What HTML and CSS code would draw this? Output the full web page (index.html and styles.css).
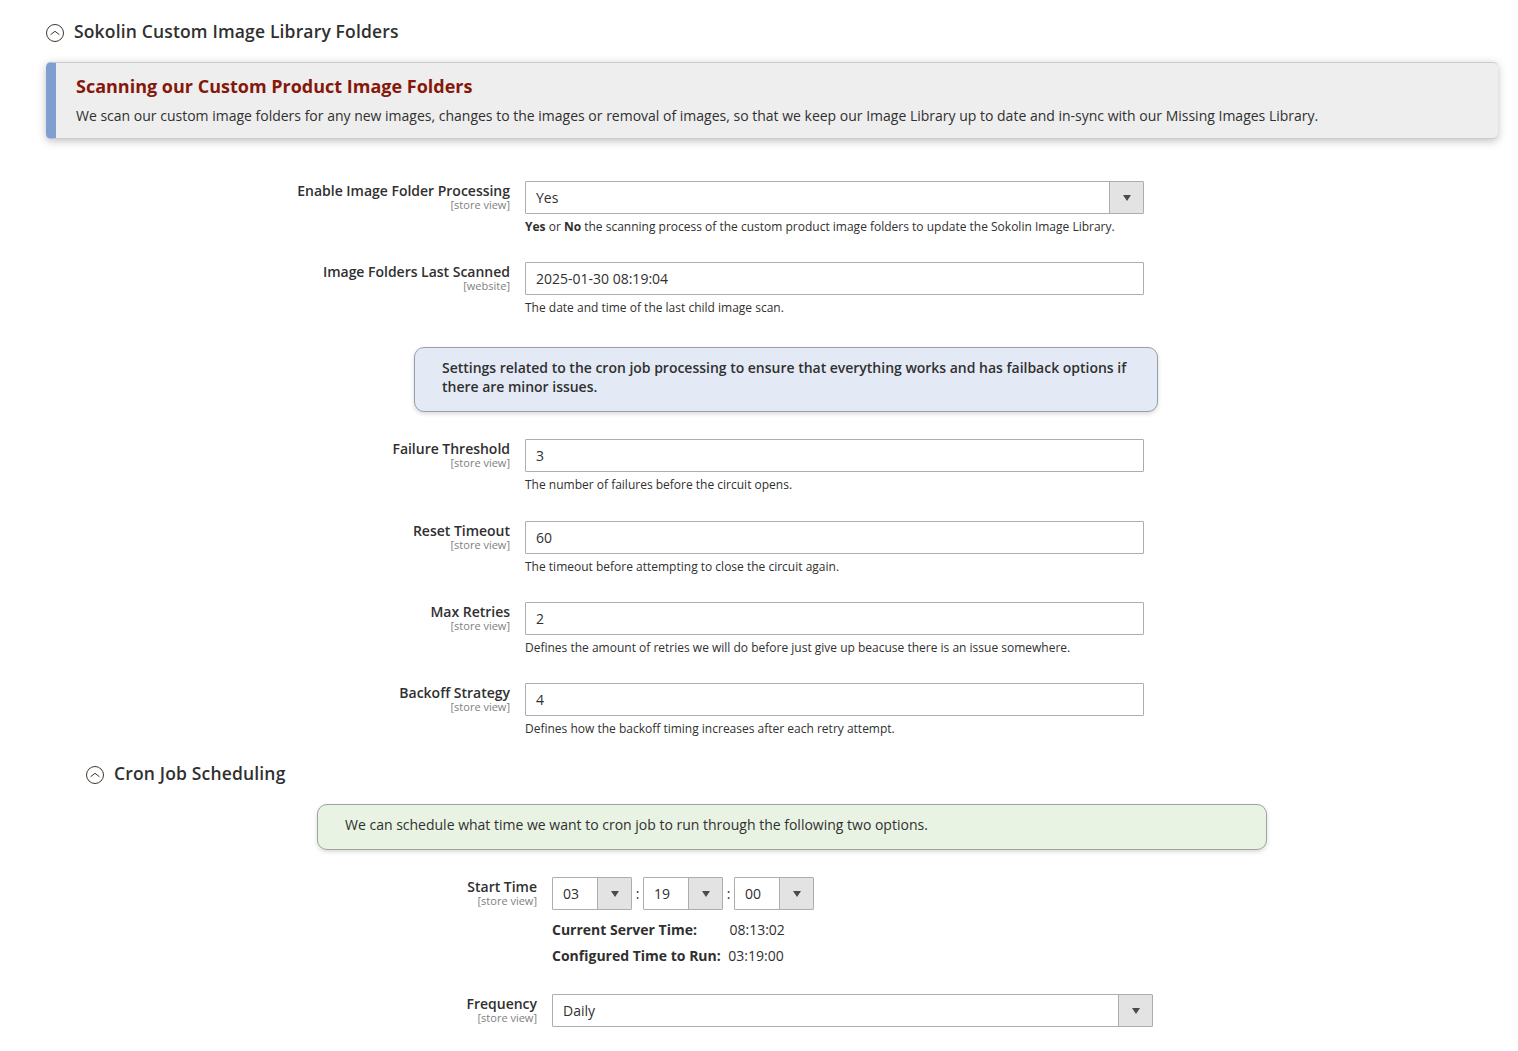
FILE: index.html
```html
<!DOCTYPE html>
<html lang="en">
<head>
<meta charset="utf-8">
<title>Sokolin Custom Image Library Folders</title>
<link rel="stylesheet" href="styles.css">
</head>
<body>
<main class="config">
  <h2 class="section-title section-title-main">
    <svg class="toggle" viewBox="0 0 18 18"><circle cx="9" cy="9" r="8.5"/><path d="M4.6 10.700 9 7.300l4.400 3.400"/></svg>
    <span>Sokolin Custom Image Library Folders</span>
  </h2>

  <div class="banner">
    <h3 class="banner-title">Scanning our Custom Product Image Folders</h3>
    <p class="banner-text">We scan our custom image folders for any new images, changes to the images or removal of images, so that we keep our Image Library up to date and in-sync with our Missing Images Library.</p>
  </div>

  <section class="rows rows-scan">
    <div class="row">
      <div class="label">Enable Image Folder Processing<span class="scope">[store view]</span></div>
      <div class="field">
        <div class="control"><span class="value">Yes</span><span class="arrow"><svg viewBox="0 0 8 6"><path d="M0 0h8L4 6z"/></svg></span></div>
        <p class="note"><b>Yes</b> or <b>No</b> the scanning process of the custom product image folders to update the Sokolin Image Library.</p>
      </div>
    </div>
    <div class="row">
      <div class="label">Image Folders Last Scanned<span class="scope">[website]</span></div>
      <div class="field">
        <div class="control"><span class="value">2025-01-30 08:19:04</span></div>
        <p class="note">The date and time of the last child image scan.</p>
      </div>
    </div>
  </section>

  <div class="notice notice-blue">Settings related to the cron job processing to ensure that everything works and has failback options if there are minor issues.</div>

  <section class="rows rows-retry">
    <div class="row">
      <div class="label">Failure Threshold<span class="scope">[store view]</span></div>
      <div class="field">
        <div class="control"><span class="value">3</span></div>
        <p class="note">The number of failures before the circuit opens.</p>
      </div>
    </div>
    <div class="row">
      <div class="label">Reset Timeout<span class="scope">[store view]</span></div>
      <div class="field">
        <div class="control"><span class="value">60</span></div>
        <p class="note">The timeout before attempting to close the circuit again.</p>
      </div>
    </div>
    <div class="row">
      <div class="label">Max Retries<span class="scope">[store view]</span></div>
      <div class="field">
        <div class="control"><span class="value">2</span></div>
        <p class="note">Defines the amount of retries we will do before just give up beacuse there is an issue somewhere.</p>
      </div>
    </div>
    <div class="row row-last">
      <div class="label">Backoff Strategy<span class="scope">[store view]</span></div>
      <div class="field">
        <div class="control"><span class="value">4</span></div>
        <p class="note">Defines how the backoff timing increases after each retry attempt.</p>
      </div>
    </div>
  </section>

  <h2 class="section-title section-title-nested">
    <svg class="toggle" viewBox="0 0 18 18"><circle cx="9" cy="9" r="8.5"/><path d="M4.6 10.700 9 7.300l4.400 3.400"/></svg>
    <span>Cron Job Scheduling</span>
  </h2>

  <div class="notice notice-green">We can schedule what time we want to cron job to run through the following two options.</div>

  <section class="rows rows-cron">
    <div class="row row-time">
      <div class="label">Start Time<span class="scope">[store view]</span></div>
      <div class="field">
        <div class="time">
          <div class="control"><span class="value">03</span><span class="arrow"><svg viewBox="0 0 8 6"><path d="M0 0h8L4 6z"/></svg></span></div>
          <span class="colon">:</span>
          <div class="control"><span class="value">19</span><span class="arrow"><svg viewBox="0 0 8 6"><path d="M0 0h8L4 6z"/></svg></span></div>
          <span class="colon">:</span>
          <div class="control"><span class="value">00</span><span class="arrow"><svg viewBox="0 0 8 6"><path d="M0 0h8L4 6z"/></svg></span></div>
        </div>
        <dl class="clock">
          <div class="clock-line clock-current"><dt>Current Server Time:</dt><dd>08:13:02</dd></div>
          <div class="clock-line clock-configured"><dt>Configured Time to Run:</dt><dd>03:19:00</dd></div>
        </dl>
      </div>
    </div>
    <div class="row">
      <div class="label">Frequency<span class="scope">[store view]</span></div>
      <div class="field">
        <div class="control"><span class="value">Daily</span><span class="arrow"><svg viewBox="0 0 8 6"><path d="M0 0h8L4 6z"/></svg></span></div>
      </div>
    </div>
  </section>
</main>
</body>
</html>
```
FILE: styles.css
```css
* { box-sizing: border-box; }

body {
  margin: 0;
  background: #fff;
  color: #303030;
  font-family: "Open Sans", sans-serif;
  font-size: 14px;
  line-height: 19px;
}

h2, h3, p, dl, dd { margin: 0; }

.config {
  height: 1051px;
  padding: 20px 20px 0 46px;
  overflow: hidden;
}

.section-title {
  display: flex;
  align-items: center;
  gap: 10px;
  height: 24px;
  font-size: 17.5px;
  font-weight: 600;
  letter-spacing: 0.16px;
}

.section-title-main span { margin-bottom: 2px; }
.section-title-nested { margin: 18.550px 0 0 40px; }

.toggle {
  width: 18px;
  height: 18px;
  margin-top: 2px;
  fill: none;
  stroke: #41362f;
  stroke-width: 1;
}

.banner {
  height: 77px;
  margin-top: 18px;
  padding: 11px 20px 0;
  border: solid #ccc;
  border-width: 1px 0 1px 10px;
  border-left-color: #7f9fd1;
  border-radius: 5px;
  background: #eee;
  box-shadow: 0 2px 8px rgba(0, 0, 0, 0.25);
}

.banner-title {
  color: #85180b;
  font-size: 18px;
  font-weight: 700;
  line-height: 24px;
}

.banner-text { margin-top: 8px; }

.rows-scan { margin-top: 42px; }
.rows-retry { margin-top: 27.4px; }
.rows-cron { margin-top: 27px; }

.row {
  display: grid;
  grid-template-columns: 464px 619px;
  column-gap: 15px;
  height: 81.350px;
}

.row-last { height: 60px; }

.rows-cron .row { grid-template-columns: 491px 601px; }
.rows-cron .row-time { height: 117px; }

.label {
  font-weight: 600;
  letter-spacing: -0.015px;
  text-align: right;
}

.scope {
  display: block;
  color: #808080;
  font-size: 11px;
  font-weight: 400;
  letter-spacing: 0;
  line-height: 9px;
}

.control {
  display: flex;
  height: 33px;
  border: 1px solid #adadad;
  border-radius: 1px;
  background: #fff;
}

.value {
  flex: 1;
  padding-left: 10px;
  line-height: 32px;
}

.arrow {
  display: flex;
  align-items: center;
  justify-content: center;
  width: 34px;
  border-left: 1px solid #adadad;
  background: #e3e3e3;
}

.arrow svg {
  width: 8px;
  height: 6px;
  margin-left: 1px;
  margin-top: 1px;
  fill: #514943;
}

.note {
  margin-top: 5px;
  font-size: 12px;
  line-height: 16px;
}

.notice {
  padding: 10px 27px;
  border: 1px solid #999fa8;
  border-radius: 10px;
  box-shadow: 0 2px 4px rgba(0, 0, 0, 0.15);
}

.notice-blue {
  width: 744px;
  height: 65px;
  margin: 3.3px 0 0 368px;
  background: #e4eaf5;
  font-weight: 600;
  letter-spacing: -0.015px;
}

.notice-green {
  width: 950px;
  height: 46px;
  margin: 18px 0 0 271px;
  border-color: #9da59b;
  background: #e9f3e3;
}

.time { display: flex; }
.time .control { width: 80px; }

.colon {
  width: 11px;
  line-height: 33px;
  text-align: center;
}

.clock { margin-top: 7px; }

.clock-line {
  display: flex;
  height: 26px;
  line-height: 26px;
}

.clock dt { font-weight: 700; }
.clock-current { gap: 32.5px; }
.clock-configured { gap: 7.5px; }
```
